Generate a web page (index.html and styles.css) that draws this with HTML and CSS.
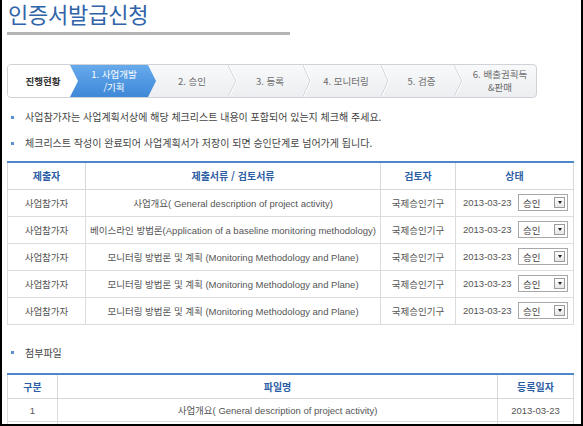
FILE: index.html
```html
<!DOCTYPE html>
<html lang="ko">
<head>
<meta charset="utf-8">
<title>인증서발급신청</title>
<link rel="stylesheet" href="styles.css">
</head>
<body>
<div class="page">
  <h1 class="title">인증서발급신청</h1>
  <div class="title-rule"></div>

  <div class="steps">
    <div class="step step-label">진행현황</div>
    <div class="step step-active">1. 사업개발<br>/기획</div>
    <div class="step w72">2. 승인</div>
    <svg class="chev" width="9" height="32" viewBox="0 0 9 32"><polyline points="0,0 8,16 0,32" fill="none" stroke="#cdd1d6"/><polyline points="1,0 9,16 1,32" fill="none" stroke="#ffffff"/></svg>
    <div class="step w66">3. 등록</div>
    <svg class="chev" width="8" height="32" viewBox="0 0 8 32"><polyline points="0,0 7,16 0,32" fill="none" stroke="#cdd1d6"/><polyline points="1,0 8,16 1,32" fill="none" stroke="#ffffff"/></svg>
    <div class="step w70">4. 모니터링</div>
    <svg class="chev" width="8" height="32" viewBox="0 0 8 32"><polyline points="0,0 7,16 0,32" fill="none" stroke="#cdd1d6"/><polyline points="1,0 8,16 1,32" fill="none" stroke="#ffffff"/></svg>
    <div class="step w65">5. 검증</div>
    <svg class="chev" width="9" height="32" viewBox="0 0 9 32"><polyline points="0,0 8,16 0,32" fill="none" stroke="#cdd1d6"/><polyline points="1,0 9,16 1,32" fill="none" stroke="#ffffff"/></svg>
    <div class="step w74">6. 배출권획득<br>&amp;판매</div>
  </div>

  <ul class="notes">
    <li>사업참가자는 사업계획서상에 해당 체크리스트 내용이 포함되어 있는지 체크해 주세요.</li>
    <li>체크리스트 작성이 완료되어 사업계획서가 저장이 되면 승인단계로 넘어가게 됩니다.</li>
  </ul>

  <table class="grid docs">
    <colgroup>
      <col class="c-sub"><col class="c-doc"><col class="c-rev"><col class="c-state">
    </colgroup>
    <thead>
      <tr><th>제출자</th><th>제출서류 / 검토서류</th><th>검토자</th><th>상태</th></tr>
    </thead>
    <tbody>
      <tr>
        <td>사업참가자</td>
        <td>사업개요( General description of project activity)</td>
        <td>국제승인기구</td>
        <td><div class="state"><span class="date">2013-03-23</span><span class="select"><span class="sel-text">승인</span><span class="sel-btn"><span class="tri"></span></span></span></div></td>
      </tr>
      <tr>
        <td>사업참가자</td>
        <td>베이스라인 방법론(Application of a baseline monitoring methodology)</td>
        <td>국제승인기구</td>
        <td><div class="state"><span class="date">2013-03-23</span><span class="select"><span class="sel-text">승인</span><span class="sel-btn"><span class="tri"></span></span></span></div></td>
      </tr>
      <tr>
        <td>사업참가자</td>
        <td>모니터링 방법론 및 계획 (Monitoring Methodology and Plane)</td>
        <td>국제승인기구</td>
        <td><div class="state"><span class="date">2013-03-23</span><span class="select"><span class="sel-text">승인</span><span class="sel-btn"><span class="tri"></span></span></span></div></td>
      </tr>
      <tr>
        <td>사업참가자</td>
        <td>모니터링 방법론 및 계획 (Monitoring Methodology and Plane)</td>
        <td>국제승인기구</td>
        <td><div class="state"><span class="date">2013-03-23</span><span class="select"><span class="sel-text">승인</span><span class="sel-btn"><span class="tri"></span></span></span></div></td>
      </tr>
      <tr>
        <td>사업참가자</td>
        <td>모니터링 방법론 및 계획 (Monitoring Methodology and Plane)</td>
        <td>국제승인기구</td>
        <td><div class="state"><span class="date">2013-03-23</span><span class="select"><span class="sel-text">승인</span><span class="sel-btn"><span class="tri"></span></span></span></div></td>
      </tr>
    </tbody>
  </table>

  <ul class="notes attach">
    <li>첨부파일</li>
  </ul>

  <table class="grid files">
    <colgroup>
      <col class="c-no"><col class="c-name"><col class="c-day">
    </colgroup>
    <thead>
      <tr><th>구분</th><th>파일명</th><th>등록일자</th></tr>
    </thead>
    <tbody>
      <tr><td>1</td><td>사업개요( General description of project activity)</td><td>2013-03-23</td></tr>
      <tr><td></td><td></td><td></td></tr>
    </tbody>
  </table>
</div>
</body>
</html>
```

FILE: styles.css
```css
* { box-sizing: border-box; }

body {
  margin: 0;
  background: #ffffff;
}

.page {
  width: 583px;
  height: 426px;
  overflow: hidden;
  border-left: 2px solid #000;
  border-right: 2px solid #000;
  border-bottom: 2px solid #000;
  padding-left: 5px;
  background: #ffffff;
  font-family: "Liberation Sans", "Noto Sans CJK KR", sans-serif;
  color: #555;
}

.title {
  margin: 0;
  padding-left: 1px;
  font-family: "Noto Sans CJK KR", sans-serif;
  font-size: 22px;
  font-weight: 400;
  line-height: 26px;
  color: #2f64a8;
  letter-spacing: -0.2px;
}

.title-rule {
  width: 283px;
  height: 3px;
  margin-top: 6px;
  background: #b4b4b4;
}

/* progress steps */
.steps {
  display: flex;
  width: 530px;
  height: 34px;
  margin-top: 29px;
  border: 1px solid #cfd2d6;
  border-radius: 4px;
  overflow: hidden;
  background: linear-gradient(#f8f9fa, #eceef1);
}

.step {
  display: flex;
  align-items: center;
  justify-content: center;
  flex: none;
  height: 32px;
  text-align: center;
  font-family: "Noto Sans CJK KR", sans-serif;
  font-size: 9.5px;
  line-height: 13px;
  color: #6b6b6b;
}

.step-label {
  position: relative;
  z-index: 2;
  width: 70px;
  background: #ffffff;
  color: #333;
  font-weight: 700;
  clip-path: polygon(0 0, calc(100% - 8px) 0, 100% 50%, calc(100% - 8px) 100%, 0 100%);
}

.step-active {
  position: relative;
  z-index: 1;
  width: 86px;
  margin-left: -8px;
  padding-left: 6px;
  padding-right: 4px;
  background: linear-gradient(#67aaec, #3e88d8);
  color: #ffffff;
  clip-path: polygon(0 0, calc(100% - 8px) 0, 100% 50%, calc(100% - 8px) 100%, 0 100%);
}

.w72 { width: 72px; }
.w66 { width: 66px; }
.w70 { width: 70px; }
.w65 { width: 65px; }
.w74 { width: 74px; }

.chev {
  display: block;
  flex: none;
}

/* notes */
.notes {
  list-style: none;
  margin: 12px 0 0;
  padding: 0;
}

.notes li {
  display: flex;
  align-items: center;
  height: 14px;
  margin-bottom: 12px;
  font-family: "Noto Sans CJK KR", sans-serif;
  font-size: 10px;
  line-height: 14px;
  color: #444;
}

.notes li::before {
  content: "";
  flex: none;
  width: 3px;
  height: 3px;
  margin-left: 4px;
  margin-right: 11px;
  background: #5a8fd0;
}

.notes.attach {
  margin-top: 21px;
}

.notes.attach li {
  margin-bottom: 13px;
}

/* tables */
.grid {
  width: 566px;
  border-collapse: collapse;
  table-layout: fixed;
  border-top: 2px solid #4d87c9;
}

.docs {
  margin-top: -1px;
}

.c-sub { width: 78px; }
.c-doc { width: 295px; }
.c-rev { width: 75px; }
.c-state { width: 118px; }

.c-no { width: 50px; }
.c-name { width: 440px; }
.c-day { width: 76px; }

.grid th {
  height: 27px;
  padding: 0;
  border: 1px solid #d8d8d8;
  border-top: none;
  font-family: "Noto Sans CJK KR", sans-serif;
  font-size: 10px;
  font-weight: 700;
  color: #2c5ea5;
  text-align: center;
}

.grid td {
  height: 27px;
  padding: 0;
  border: 1px solid #dcdcdc;
  font-size: 9.5px;
  color: #555;
  text-align: center;
  white-space: nowrap;
  overflow: hidden;
}

.files th { height: 25px; }
.files td { height: 23px; }

.state {
  display: flex;
  align-items: center;
  justify-content: space-between;
  padding: 0 5px 0 7px;
}

.date {
  font-size: 9.5px;
  color: #555;
}

.select {
  display: flex;
  align-items: center;
  justify-content: space-between;
  width: 50px;
  height: 17px;
  border: 1px solid #a8a8a8;
  background: #fff;
  padding: 0 2px 0 4px;
}

.sel-text {
  font-family: "Noto Sans CJK KR", sans-serif;
  font-size: 9.5px;
  color: #444;
}

.sel-btn {
  display: flex;
  align-items: center;
  justify-content: center;
  width: 11px;
  height: 11px;
  border: 1px solid #9a9a9a;
  background: linear-gradient(#ffffff, #e6e6e6);
}

.tri {
  width: 0;
  height: 0;
  border-left: 2.5px solid transparent;
  border-right: 2.5px solid transparent;
  border-top: 3px solid #222;
}
```
